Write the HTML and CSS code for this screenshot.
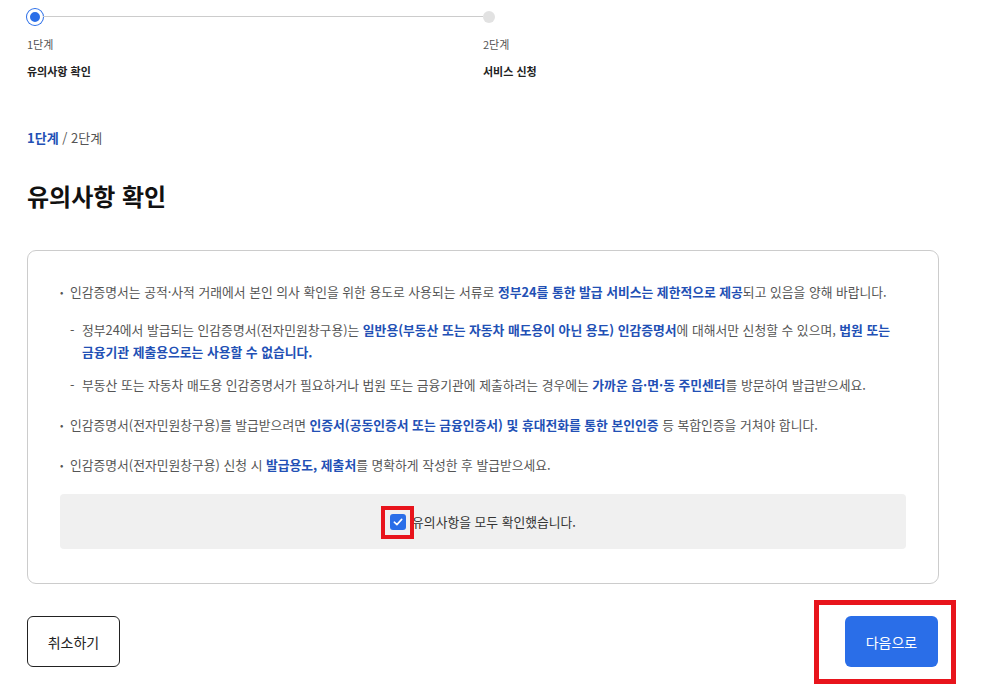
FILE: index.html
```html
<!DOCTYPE html>
<html lang="ko">
<head>
    <meta charset="UTF-8">
    <meta name="viewport" content="width=device-width, initial-scale=1.0">
    <title>인감증명서 발급 - 유의사항 확인</title>
    <link rel="stylesheet" href="styles.css">
</head>
<body>

<div class="page">

    <div class="stepper">
        <div class="step step-active">
            <div class="track">
                <span class="dot"></span>
                <span class="line"></span>
            </div>
            <div class="step-num">1단계</div>
            <div class="step-name">유의사항 확인</div>
        </div>
        <div class="step">
            <div class="track">
                <span class="dot"></span>
            </div>
            <div class="step-num">2단계</div>
            <div class="step-name">서비스 신청</div>
        </div>
    </div>

    <div class="crumb"><strong>1단계</strong> / 2단계</div>

    <h1 class="title">유의사항 확인</h1>

    <div class="notice">
        <ul class="list">
            <li>
                인감증명서는 공적·사적 거래에서 본인 의사 확인을 위한 용도로 사용되는 서류로 <b>정부24를 통한 발급 서비스는 제한적으로 제공</b>되고 있음을 양해 바랍니다.
                <ul class="sub">
                    <li>정부24에서 발급되는 인감증명서(전자민원창구용)는 <b>일반용(부동산 또는 자동차 매도용이 아닌 용도) 인감증명서</b>에 대해서만 신청할 수 있으며, <b>법원 또는<br>금융기관 제출용으로는 사용할 수 없습니다.</b></li>
                    <li>부동산 또는 자동차 매도용 인감증명서가 필요하거나 법원 또는 금융기관에 제출하려는 경우에는 <b>가까운 읍·면·동 주민센터</b>를 방문하여 발급받으세요.</li>
                </ul>
            </li>
            <li>인감증명서(전자민원창구용)를 발급받으려면 <b>인증서(공동인증서 또는 금융인증서) 및 휴대전화를 통한 본인인증</b> 등 복합인증을 거쳐야 합니다.</li>
            <li>인감증명서(전자민원창구용) 신청 시 <b>발급용도, 제출처</b>를 명확하게 작성한 후 발급받으세요.</li>
        </ul>

        <label class="agree">
            <span class="mark">
                <span class="box">
                    <svg width="12" height="12" viewBox="0 0 12 12"><path d="M2.3 6.2 L4.9 8.6 L9.7 3.4" fill="none" stroke="#fff" stroke-width="1.6" stroke-linecap="round" stroke-linejoin="round"/></svg>
                </span>
                <span class="hilite hilite-check"></span>
            </span>
            유의사항을 모두 확인했습니다.
        </label>
    </div>

    <div class="actions">
        <button class="btn btn-line">취소하기</button>
        <div class="mark">
            <button class="btn btn-blue">다음으로</button>
            <span class="hilite hilite-next"></span>
        </div>
    </div>

</div>

</body>
</html>
```

FILE: styles.css
```css
body {
    margin: 0;
    font-family: "Noto Sans CJK KR", "Noto Sans", sans-serif;
    color: #333;
    background: #fff;
}
.page {
    width: 912px;
    padding: 0 0 27px 27px;
}

/* stepper */
.stepper {
    display: flex;
}
.step {
    width: 456px;
    flex: none;
}
.track {
    display: flex;
    align-items: center;
    height: 33px;
}
.dot {
    width: 12px;
    height: 12px;
    border-radius: 50%;
    background: #e2e2e2;
    flex: none;
}
.step-active .dot {
    width: 10px;
    height: 10px;
    background: #2a6ee8;
    border: 3px solid #fff;
    box-shadow: 0 0 0 1px #2a6ee8;
}
.line {
    flex: 1;
    height: 1px;
    background: #ccc;
}
.step-num {
    font-size: 11px;
    color: #555;
    margin-top: 2px;
    line-height: 18px;
}
.step-name {
    font-size: 11px;
    font-weight: bold;
    color: #222;
    margin-top: 9px;
    line-height: 18px;
}

.crumb {
    margin-top: 49px;
    font-size: 13px;
    color: #555;
    line-height: 18px;
}
.crumb strong {
    color: #2250b5;
}
.title {
    margin: 32px 0 0;
    font-size: 24px;
    line-height: 34px;
    color: #111;
}

/* notice box */
.notice {
    margin-top: 37px;
    border: 1px solid #ccc;
    border-radius: 9px;
    padding: 30px 32px 34px;
}
.list {
    list-style: none;
    margin: 0;
    padding: 0;
    font-size: 12.8px;
    line-height: 22px;
    color: #555;
}
.list > li {
    position: relative;
    padding-left: 10px;
    margin-bottom: 18px;
}
.list > li::before {
    content: "•";
    position: absolute;
    left: 0;
    top: 0;
    font-size: 10px;
}
.list b {
    color: #2250b5;
}
.sub {
    list-style: none;
    margin: 16px 0 0;
    padding: 0;
}
.sub li {
    position: relative;
    padding-left: 12px;
    margin-bottom: 11px;
}
.sub li:last-child {
    margin-bottom: 0;
}
.sub li::before {
    content: "-";
    position: absolute;
    left: 0;
    top: 0;
}

.agree {
    display: flex;
    align-items: center;
    justify-content: center;
    height: 55px;
    margin-top: 12px;
    background: #f0f0f0;
    border-radius: 4px;
    font-size: 12.8px;
    color: #333;
    gap: 6px;
}
.mark {
    position: relative;
    display: flex;
}
.box {
    width: 16px;
    height: 16px;
    background: #2a6ee8;
    border-radius: 3px;
    display: flex;
    align-items: center;
    justify-content: center;
}
.hilite {
    position: absolute;
    box-sizing: border-box;
    border: 4px solid #e8141c;
    pointer-events: none;
}
.hilite-check {
    left: -9px;
    top: -8px;
    width: 33px;
    height: 33px;
}
.hilite-next {
    left: -31px;
    top: -16px;
    width: 142px;
    height: 84px;
    border-width: 5px;
}

/* buttons */
.actions {
    display: flex;
    align-items: flex-start;
    justify-content: space-between;
    margin-top: 32px;
    padding-right: 1px;
}
.btn {
    width: 93px;
    height: 51px;
    border-radius: 6px;
    font-family: inherit;
    font-size: 14px;
    cursor: pointer;
}
.btn-line {
    background: #fff;
    border: 1px solid #222;
    color: #222;
}
.btn-blue {
    background: #2a6ee8;
    border: none;
    color: #fff;
}
```
